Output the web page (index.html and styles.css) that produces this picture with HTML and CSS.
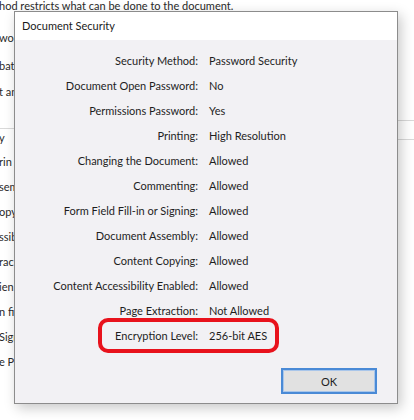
FILE: index.html
```html
<!DOCTYPE html>
<html>
<head>
<meta charset="utf-8">
<link rel="stylesheet" href="styles.css">
</head>
<body>
<div class="page">
  <div class="top-line">hod restricts what can be done to the document.</div>
  <div class="rule rule-a"></div>
  <div class="rule rule-b"></div>
  <div class="rule rule-c"></div>
  <div class="side">
    <div class="side-line l1">word</div>
    <div class="side-line l2">bat</div>
    <div class="side-line l3">t and</div>
    <div class="side-line l4">y</div>
    <div class="side-line l5">rin</div>
    <div class="side-line l6">sem</div>
    <div class="side-line l7">opy</div>
    <div class="side-line l8">ssib</div>
    <div class="side-line l9">rac</div>
    <div class="side-line l10">ien</div>
    <div class="side-line l11">n fi</div>
    <div class="side-line l12">Sign</div>
    <div class="side-line l13">e Pa</div>
  </div>

  <div class="dialog">
    <div class="titlebar">Document Security</div>
    <div class="content">
      <div class="grid">
        <div class="lbl">Security Method:</div><div class="val">Password Security</div>
        <div class="lbl">Document Open Password:</div><div class="val">No</div>
        <div class="lbl">Permissions Password:</div><div class="val">Yes</div>
        <div class="lbl">Printing:</div><div class="val">High Resolution</div>
        <div class="lbl">Changing the Document:</div><div class="val">Allowed</div>
        <div class="lbl">Commenting:</div><div class="val">Allowed</div>
        <div class="lbl">Form Field Fill-in or Signing:</div><div class="val">Allowed</div>
        <div class="lbl">Document Assembly:</div><div class="val">Allowed</div>
        <div class="lbl">Content Copying:</div><div class="val">Allowed</div>
        <div class="lbl">Content Accessibility Enabled:</div><div class="val">Allowed</div>
        <div class="lbl">Page Extraction:</div><div class="val">Not Allowed</div>
        <div class="lbl">Encryption Level:</div><div class="val">256-bit AES</div>
      </div>
      <div class="footer">
        <button class="ok">OK</button>
      </div>
    </div>
    <div class="highlight"></div>
  </div>
</div>
</body>
</html>
```

FILE: styles.css
```css
html, body {
  margin: 0;
  padding: 0;
  background: #ffffff;
}

body {
  width: 414px;
  height: 420px;
  overflow: hidden;
  font-family: Lato, "Open Sans", "DejaVu Sans", sans-serif;
  color: #1e1e1e;
}

.page {
  position: relative;
  width: 414px;
  height: 420px;
  overflow: hidden;
}

.top-line {
  position: absolute;
  left: -1px;
  top: -2px;
  font-size: 11px;
  white-space: nowrap;
  color: #2a2a2a;
  line-height: 15px;
}

.rule {
  position: absolute;
  height: 1px;
  background: #d9d9d9;
}
.rule-a { left: 398px; right: 0; top: 120px; }
.rule-b { left: 0; width: 14px; top: 128px; }
.rule-c { left: 398px; right: 0; top: 139px; }

.side {
  position: absolute;
  left: 0;
  top: 0;
  width: 14px;
  height: 420px;
  overflow: hidden;
}

.side-line {
  position: absolute;
  left: -1px;
  font-size: 11px;
  white-space: nowrap;
  color: #2a2a2a;
  line-height: 16px;
}
.l1 { top: 30px; }
.l2 { top: 58px; }
.l3 { top: 84px; }
.l4 { top: 130px; }
.l5 { top: 154px; }
.l6 { top: 179px; }
.l7 { top: 204px; }
.l8 { top: 229px; }
.l9 { top: 254px; }
.l10 { top: 279px; }
.l11 { top: 304px; }
.l12 { top: 329px; }
.l13 { top: 354px; }

.dialog {
  position: absolute;
  left: 14px;
  top: 11px;
  width: 382px;
  height: 391px;
  border: 1px solid #8c8c8c;
  background: #f2f1f4;
  box-shadow: 3px 4px 12px rgba(0, 0, 0, 0.22);
  display: flex;
  flex-direction: column;
}

.titlebar {
  height: 28px;
  background: #ffffff;
  font-size: 11px;
  line-height: 27px;
  padding-left: 7px;
  color: #1a1a1a;
  flex: none;
}

.content {
  flex: 1;
  display: flex;
  flex-direction: column;
}

.grid {
  display: grid;
  grid-template-columns: 183px auto;
  column-gap: 11px;
  grid-auto-rows: 25px;
  padding-top: 8px;
  font-size: 11px;
}

.lbl {
  text-align: right;
  line-height: 25px;
  white-space: nowrap;
  color: #1e1e1e;
}

.val {
  line-height: 25px;
  white-space: nowrap;
  color: #1e1e1e;
}

.footer {
  display: flex;
  justify-content: flex-end;
  padding-top: 20px;
  padding-right: 20px;
}

.ok {
  width: 96px;
  height: 26px;
  border: 2px solid #4a8ad6;
  background: #e1e1e1;
  font-family: inherit;
  font-size: 11px;
  color: #1e1e1e;
  padding: 0;
  margin: 0;
  box-shadow: inset 0 0 0 1px #a9c6ea;
}

.highlight {
  position: absolute;
  left: 83px;
  top: 306px;
  width: 173px;
  height: 27px;
  border: 4px solid #e8121c;
  border-radius: 10px;
}
```
